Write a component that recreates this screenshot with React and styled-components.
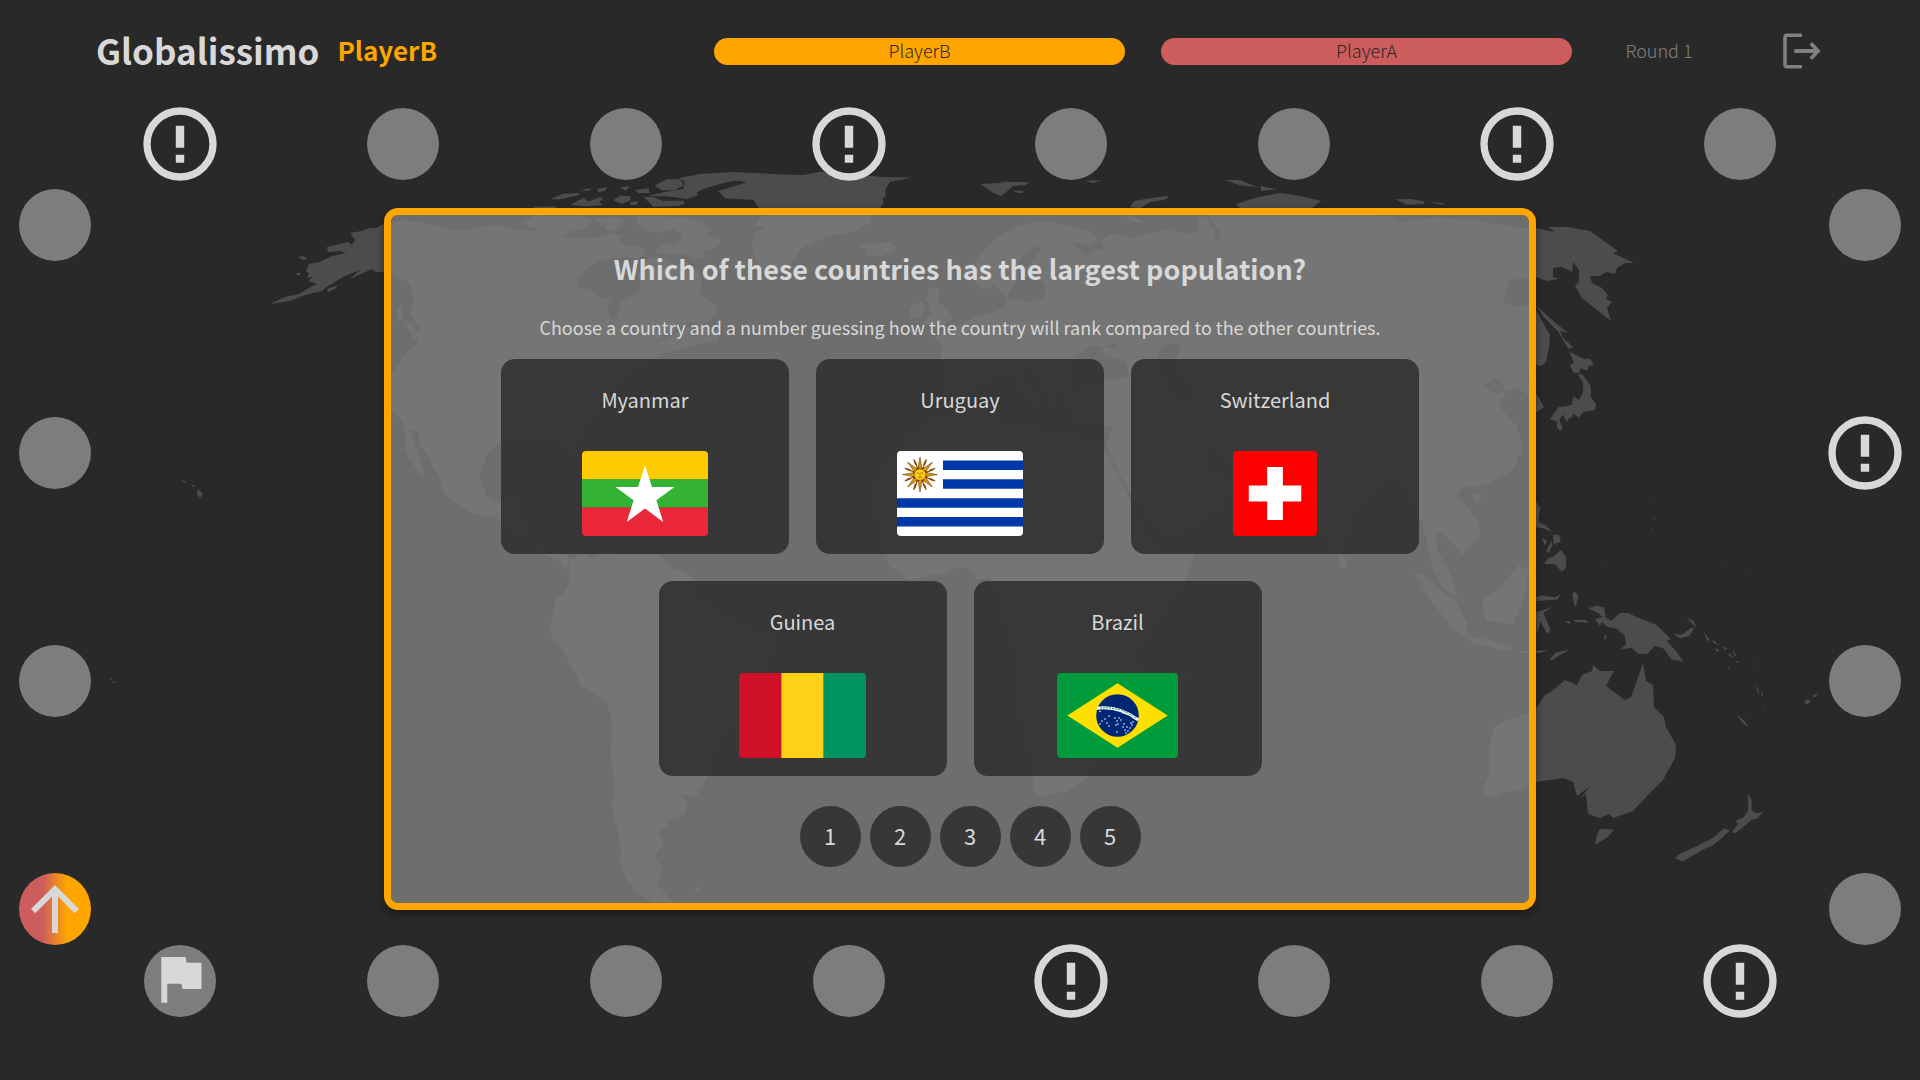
import React, { useState } from "react";
import styled, { createGlobalStyle, css } from "styled-components";
import { MdArrowUpward } from "react-icons/md";

const colors = {
  ground: "#292929",
  land: "#4c4c4c",
  field: "#7d7d7d",
  text: "#d8d8d8",
  muted: "#808080",
  playerA: "#cd5c5c",
  playerB: "#ffa500",
};

const GlobalStyle = createGlobalStyle`
  *, *::before, *::after { box-sizing: border-box; }
  body {
    margin: 0;
    background: ${colors.ground};
    color: ${colors.text};
    font-family: "Noto Sans CJK JP", "Open Sans", sans-serif;
    font-size: 18px;
  }
  h1, h2, p { margin: 0; }
  button { font: inherit; color: inherit; border: 0; padding: 0; cursor: pointer; }
`;

const Page = styled.div`
  position: relative;
  isolation: isolate;
  display: flex;
  flex-direction: column;
  min-height: 100vh;
  padding-bottom: 63px;
`;

const MapBackdrop = styled.svg`
  position: absolute;
  inset: 0;
  z-index: -1;
  width: 100%;
  height: 100%;
  fill: ${colors.land};
`;

const Header = styled.header`
  display: grid;
  grid-template-columns: 618fr 858fr 174px 111px;
  align-items: center;
  height: 108px;
  padding: 0 63px 6px 96px;
`;

const Brand = styled.div`
  display: flex;
  align-items: center;
  gap: 18px;
  padding-bottom: 2px;
`;

const Logo = styled.h1`
  font-size: 35px;
  line-height: 48px;
  font-weight: 700;
`;

const CurrentPlayer = styled.span`
  font-size: 26px;
  line-height: 48px;
  font-weight: 700;
  color: ${colors.playerB};
`;

const Scores = styled.div`
  display: flex;
  gap: 36px;
`;

const ScorePill = styled.div`
  flex: 1;
  padding-bottom: 2px;
  border-radius: 14px;
  background: ${(p) => p.$color};
  color: ${colors.ground};
  font-size: 18px;
  line-height: 25px;
  font-weight: 300;
  text-align: center;
`;

const Round = styled.span`
  padding-bottom: 2px;
  color: ${colors.muted};
  font-size: 18px;
  line-height: 25px;
  font-weight: 300;
  text-align: center;
`;

const ExitButton = styled.button`
  display: flex;
  justify-self: center;
  background: none;
  color: ${colors.muted};
`;

const Board = styled.main`
  flex: 1;
  display: flex;
  flex-direction: column;
`;

const FieldRow = styled.div`
  display: flex;
  justify-content: space-between;
  padding: 0 144px;
`;

const Middle = styled.div`
  flex: 1;
  display: flex;
  justify-content: space-between;
  align-items: stretch;
  margin-top: 9px;
  padding: 0 19px;
`;

const FieldColumn = styled.div`
  display: flex;
  flex-direction: column;
  justify-content: space-between;
`;

const fieldKinds = {
  plain: css`
    background: ${colors.field};
  `,
  event: css`
    background: none;
  `,
  players: css`
    background: linear-gradient(
      90deg,
      ${colors.playerA} 33%,
      ${colors.playerB} 66%
    );
  `,
};

const FieldCircle = styled.div`
  display: flex;
  align-items: center;
  justify-content: center;
  width: 72px;
  height: 72px;
  border-radius: 50%;
  ${(p) => fieldKinds[p.$kind]}

  svg {
    flex: none;
  }
`;

const Dialog = styled.section`
  display: flex;
  flex-direction: column;
  align-items: center;
  align-self: flex-start;
  width: 60vw;
  min-height: 65vh;
  margin-top: 19px;
  padding: 34px 40px;
  border: 7px solid ${colors.playerB};
  border-radius: 14px;
  background: rgba(128, 128, 128, 0.8);
  background-clip: padding-box;
  box-shadow: 0 4px 8px rgba(0, 0, 0, 0.4);
`;

const Question = styled.h2`
  font-size: 27px;
  line-height: 40px;
  font-weight: 700;
  text-align: center;
`;

const Hint = styled.p`
  margin-top: 26px;
  font-size: 18px;
  line-height: 24px;
  text-align: center;
`;

const Countries = styled.div`
  display: flex;
  flex-wrap: wrap;
  justify-content: center;
  gap: 27px;
  margin-top: 20px;
`;

const CountryCard = styled.button`
  display: flex;
  flex-direction: column;
  align-items: center;
  justify-content: space-between;
  width: 288px;
  height: 195px;
  padding: 26px 18px 18px;
  border-radius: 14px;
  background: rgba(41, 41, 41, 0.8);

  svg {
    display: block;
    height: 85px;
    border-radius: 4px;
  }
`;

const CountryName = styled.span`
  font-size: 20px;
  line-height: 30px;
`;

const Ranks = styled.div`
  display: flex;
  gap: 9px;
  margin-top: 30px;
  padding-left: 20px;
`;

const RankButton = styled.button`
  width: 61px;
  height: 61px;
  padding-bottom: 4px;
  border-radius: 50%;
  background: rgba(41, 41, 41, 0.8);
  font-size: 22px;
  line-height: 30px;
`;

function ExitIcon() {
  return (
    <svg width="40" height="36" viewBox="0 0 40 36" fill="none" stroke="currentColor" aria-hidden="true">
      <path d="M20 2.3H5Q3 2.3 3 4.3V31.7Q3 33.7 5 33.7H20" strokeWidth="3.6" />
      <path d="M12.3 18H35" strokeWidth="4" />
      <path d="M28.8 10.3L36 18L28.8 25.7" strokeWidth="3.8" />
    </svg>
  );
}

function EventIcon() {
  return (
    <svg width="88" height="88" viewBox="0 0 24 24" fill={colors.text} aria-hidden="true">
      <circle cx="12" cy="12" r="9" fill="none" stroke={colors.text} strokeWidth="2" />
      <path d="M10.85 7h2.3v6h-2.3zM10.85 14.9h2.3v2.2h-2.3z" />
    </svg>
  );
}

function StartFlagIcon() {
  return (
    <svg width="72" height="72" viewBox="0 0 72 72" fill={colors.text} aria-hidden="true">
      <path d="M17.3 12H41.5L42.7 17.7H57.5V44H38.5L37.3 38.7H23.3V57.7H17.3Z" />
    </svg>
  );
}

function Field({ kind = "plain" }) {
  if (kind === "event")
    return (
      <FieldCircle $kind="event">
        <EventIcon />
      </FieldCircle>
    );
  if (kind === "start")
    return (
      <FieldCircle $kind="plain">
        <StartFlagIcon />
      </FieldCircle>
    );
  if (kind === "players")
    return (
      <FieldCircle $kind="players">
        <MdArrowUpward size={72} color={colors.text} />
      </FieldCircle>
    );
  return <FieldCircle $kind="plain" />;
}

function MyanmarFlag() {
  return (
    <svg width="126" height="85" viewBox="0 0 126 85" aria-hidden="true">
      <path fill="#fecb00" d="M0 0h126v28.4H0z" />
      <path fill="#34b233" d="M0 28.3h126v28.4H0z" />
      <path fill="#ea2839" d="M0 56.6h126V85H0z" />
      <path fill="#fff" d="M63 14.5L70 36H92.5L74.4 49.2L81.2 71L63 57.6L44.8 71L51.6 49.2L33.5 36H56Z" />
    </svg>
  );
}

function UruguayFlag() {
  const rays = Array.from({ length: 16 }, (_, i) => i * 22.5);
  return (
    <svg width="126" height="85" viewBox="0 0 126 85" aria-hidden="true">
      <path fill="#fff" d="M0 0h126v85H0z" />
      <path
        fill="#0038a8"
        d="M46 9.4h80v9.5H46zM46 28.3h80v9.5H46zM0 47.2h126v9.5H0zM0 66.1h126v9.5H0z"
      />
      <g transform="translate(23 23.6)">
        {rays.map((angle, i) => (
          <path
            key={angle}
            transform={`rotate(${angle})`}
            d={i % 2 ? "M-2 -5Q2.5 -10 0 -16.5Q-2 -11 2 -5Z" : "M-2.2 -5L0 -17.5L2.2 -5Z"}
            fill={i % 2 ? "#7b3f00" : "#d49a12"}
            stroke="#7b3f00"
            strokeWidth="0.6"
          />
        ))}
        <circle r="5.6" fill="#fcd116" stroke="#a86a08" strokeWidth="0.6" />
        <path d="M-3 -1.5h2M1 -1.5h2M-1.8 2.6h3.6M0 -1v2" stroke="#7b3f00" strokeWidth="0.7" />
      </g>
    </svg>
  );
}

function SwissFlag() {
  return (
    <svg width="84" height="85" viewBox="0 0 32 32" preserveAspectRatio="none" aria-hidden="true">
      <path fill="#f00" d="M0 0h32v32H0z" />
      <path fill="#fff" d="M13 6h6v7h7v6h-7v7h-6v-7H6v-6h7z" />
    </svg>
  );
}

function GuineaFlag() {
  return (
    <svg width="127" height="85" viewBox="0 0 3 2" preserveAspectRatio="none" aria-hidden="true">
      <path fill="#ce1126" d="M0 0h1v2H0z" />
      <path fill="#fcd116" d="M1 0h1v2H1z" />
      <path fill="#009460" d="M2 0h1v2H2z" />
    </svg>
  );
}

function BrazilFlag() {
  const stars = [
    [43, 38.5], [66, 40], [52, 43], [45, 48], [48, 46], [50, 50], [52, 53], [43, 51],
    [58, 45], [60, 48], [61, 51], [64, 47], [62, 45], [59, 52], [60, 59],
    [66, 54], [68, 57], [70, 54], [71, 58], [73, 55], [75, 52], [76, 49], [74, 50],
    [69, 60], [67, 51],
  ];
  return (
    <svg width="121" height="85" viewBox="0 0 121 85" aria-hidden="true">
      <path fill="#009c3b" d="M0 0h121v85H0z" />
      <path fill="#ffdf00" d="M60.5 10.3L110.7 42.5L60.5 74.7L10.3 42.5Z" />
      <circle cx="60.5" cy="42.5" r="21.3" fill="#002776" />
      <path d="M39.8 35.3Q62 32.6 81.3 47" fill="none" stroke="#fff" strokeWidth="3" />
      <path d="M43 35.1Q62 33 79 45.2" fill="none" stroke="#009c3b" strokeWidth="1" strokeDasharray="2 1" />
      {stars.map(([x, y]) => (
        <circle key={`${x}-${y}`} cx={x} cy={y} r="0.8" fill="#fff" />
      ))}
    </svg>
  );
}

function WorldMap() {
  return (
    <MapBackdrop viewBox="0 0 1920 1080" preserveAspectRatio="xMidYMid meet" aria-hidden="true">
      {/* North and Central America */}
      <path d="M270 304L285 297L299 294L309 288L317 284L308 281L313 277L307 278L309 273L306 271L309 264L319 262L332 256L346 253L340 251L328 252L327 247L348 242L352 245L355 240L350 233L362 231L370 228L376 228L384 224L406 220L429 224L460 231L470 229L482 227L500 225L510 229L536 231L558 235L575 238L598 237L612 233L622 236L618 241L630 247L638 245L645 253L630 257L613 259L597 262L582 273L575 280L579 289L588 288L600 298L610 300L607 312L612 320L617 319L621 308L620 302L635 295L641 287L638 275L643 265L648 259L655 257L667 258L677 265L687 262L698 272L702 282L700 293L707 300L715 305L717 313L707 322L687 323L667 335L648 347L667 338L687 328L697 327L692 333L715 330L718 342L705 343L687 347L663 353L653 359L640 370L620 385L600 410L590 425L575 445L577 462L568 460L562 444L540 440L520 444L500 442L488 452L479 477L487 497L499 502L515 492L524 492L520 508L512 513L530 518L532 540L550 553L566 553L570 560L566 570L558 560L540 553L515 535L501 523L495 515L480 516L471 513L443 493L439 477L420 443L418 430L410 430L420 457L424 477L420 475L404 450L406 440L402 420L391 412L386 400L388 390L392 373L404 355L418 343L420 328L410 313L414 300L410 283L396 275L384 272L376 272L372 269L350 279L360 270L345 276L328 286L322 291L305 295L290 301Z" />
      <path d="M298 257L303 256L308 259L303 260ZM295 273L301 273L299 276ZM327 289L338 285L335 289L328 292ZM397 308L402 306L403 318L398 324ZM404 323L413 324L420 335L415 341L410 331Z" />
      {/* Canadian arctic islands, Greenland and Iceland */}
      <g transform="translate(520 165) scale(0.33333)">
        <path d="M90 103L130 86L180 84L175 91L120 103ZM180 75L215 70L205 78ZM232 72L262 66L255 78L235 82ZM150 120L190 98L205 110L240 97L250 98L238 112L248 120L200 124ZM280 106L300 92L330 93L332 106L305 117ZM300 67L330 64L318 77ZM345 75L385 70L390 84L355 84ZM330 112L355 108L350 120L332 120ZM404 62L440 43L480 42L492 60L465 76L425 76ZM370 95L400 96L430 108L490 107L495 115L475 123L400 125ZM385 93L430 82L490 72L495 50L475 40L540 27L640 21L745 26L700 38L625 50L560 68L530 82L535 90L500 102L440 94ZM36 125L100 124L115 130L60 136Z" />
        <path d="M0 175L50 150L120 155L180 150L215 165L200 190L155 198L120 215L60 210L45 190ZM225 160L270 158L245 185ZM265 155L315 160L290 200L255 190ZM350 150L420 155L470 155L520 165L570 190L560 210L605 230L580 250L545 255L560 278L520 285L490 265L450 270L405 262L420 240L470 238L490 212L460 190L420 205L380 195L350 180ZM290 275L340 243L375 270L350 280ZM440 530L490 490L540 475L600 500L590 540L560 520L520 530L480 525L490 545L455 555Z" />
        <path d="M595 78L680 52L640 45L745 27L850 30L900 20L1090 36L1175 38L1110 50L1095 75L1098 92L1088 100L1090 115L1080 128L1050 155L1055 172L1000 200L920 215L840 250L820 285L795 310L740 335L715 300L695 240L705 205L745 180L705 185L715 160L740 150L717 128L700 105L615 100Z" />
        <path d="M1015 240L1060 237L1110 232L1132 250L1085 275L1035 270L1045 258Z" />
      </g>
      {/* Cuba and Hispaniola */}
      <path d="M556 478L580 482L602 492L590 493L570 485ZM606 494L630 498L622 503L606 500Z" />
      {/* South America */}
      <path d="M570 560L584 552L590 558L605 550L630 555L657 553L673 570L684 571L692 577L700 597L736 617L775 635L777 650L764 680L750 720L722 740L712 770L706 780L696 797L679 793L688 805L684 815L667 819L667 827L657 832L663 843L655 857L663 870L657 883L673 903L653 903L637 893L625 877L620 860L621 847L617 827L612 808L615 787L611 760L612 720L607 703L580 685L578 677L562 650L552 638L550 627L556 600L564 592L570 580Z" />
      <path d="M692 888L705 887L698 892Z" />
      {/* Eurasia */}
      <path
        fillRule="evenodd"
        d="M962 270L975 262L985 248L1000 235L1020 225L1043 221L1075 227L1092 232L1098 240L1092 246L1071 242L1082 252L1087 255L1106 247L1100 240L1112 234L1130 238L1165 230L1193 234L1200 230L1196 218L1205 216L1216 232L1214 244L1222 236L1208 215L1225 210L1240 208L1236 204L1255 198L1280 193L1300 196L1321 201L1312 208L1345 214L1390 216L1402 222L1435 218L1472 220L1509 226L1515 228L1536 228L1555 232L1548 227L1568 227L1590 231L1618 251L1613 253L1634 263L1625 263L1617 268L1615 274L1606 272L1600 276L1590 276L1592 283L1602 288L1608 295L1606 299L1612 302L1607 308L1611 321L1597 310L1582 298L1575 286L1579 282L1579 270L1573 262L1572 272L1562 267L1553 268L1553 277L1559 279L1547 281L1536 277L1528 278L1509 280L1503 302L1517 307L1528 305L1536 310L1550 335L1549 347L1546 362L1541 366L1536 365L1528 372L1527 382L1536 393L1544 407L1537 412L1530 405L1528 395L1518 388L1507 391L1496 377L1484 385L1494 394L1506 392L1498 405L1517 427L1523 447L1513 470L1490 483L1474 487L1462 487L1457 495L1478 520L1480 537L1462 555L1450 540L1436 530L1437 550L1450 572L1458 597L1444 590L1432 567L1428 545L1421 520L1411 510L1400 485L1385 482L1355 515L1345 548L1330 557L1315 520L1305 490L1285 480L1245 472L1225 460L1205 450L1212 468L1235 480L1225 510L1165 543L1156 535L1120 475L1106 447L1113 425L1080 425L1055 415L1060 390L1095 382L1130 377L1125 362L1100 352L1108 345L1118 344L1112 350L1122 350L1090 345L1075 358L1075 378L1060 395L1070 418L1050 405L1035 375L1020 372L1045 405L1035 410L1010 378L975 385L970 402L942 400L940 360L943 345L934 338L960 325L973 317L990 313L1005 307L1006 298L1030 303L1045 298L1045 285L1040 280L1028 278L1025 270L1042 248L1035 246L1018 262L1018 278L1006 298L994 285L984 290L975 282ZM1158 350L1170 343L1180 346L1178 357L1170 360L1180 375L1192 395L1175 398L1170 378L1158 365Z"
      />
      <path d="M930 287L940 288L938 300L953 318L943 325L920 325L932 315L926 300ZM910 307L922 301L926 309L920 317L909 318Z" />
      {/* Arctic islands north of Europe and Asia */}
      <g transform="translate(640 0) scale(0.40816 0.33333)">
        <path d="M834 552L890 548L880 545L955 547L945 556L915 558L900 573L885 588L865 578ZM915 572L940 572L935 580L918 577ZM1088 542L1132 541L1110 549ZM1200 622L1210 604L1240 596L1295 587L1290 598L1250 606L1225 625ZM1185 645L1205 645L1240 670L1205 665ZM1432 540L1470 540L1512 562L1470 556ZM1520 558L1560 568L1522 573ZM1850 598L1890 597L1920 604L1922 612L1880 614ZM1930 606L1970 609L1968 614Z" />
      </g>
      {/* Africa */}
      <path d="M884 555L870 510L872 480L885 460L910 430L940 412L980 408L1020 425L1060 428L1100 440L1115 470L1140 520L1160 548L1195 546L1193 560L1181 590L1158 627L1140 650L1146 700L1120 730L1102 757L1087 778L1067 791L1041 797L1033 790L1033 777L1019 727L1015 667L996 603L990 578L976 580L968 568L955 568L945 575L930 575L910 580L890 567Z" />
      <path d="M1185 665L1192 675L1178 720L1168 718L1170 690Z" />
      {/* Sri Lanka, Hainan, Sumatra, Java, Borneo */}
      <path d="M1338 553L1346 558L1347 567L1341 569ZM1472 494L1482 494L1480 501L1474 501ZM1414 573L1425 576L1440 590L1456 602L1467 623L1466 637L1454 630L1436 607ZM1466 636L1490 640L1513 649L1505 651L1470 642ZM1519 565L1529 570L1525 593L1513 625L1486 620L1482 600L1498 590Z" />
      {/* Sakhalin and Japan */}
      <g transform="translate(1500 210) scale(0.33333)">
        <path d="M108 285L150 325L203 368L180 363L190 385L220 412L205 416L175 365L130 320ZM208 425L255 448L268 444L282 462L265 470L262 482L240 475L238 489L220 488L210 465L222 460ZM233 493L247 493L272 528L272 560L288 582L285 600L250 605L237 623L222 612L185 618L178 630L188 655L180 663L170 650L172 635L150 628L175 592L215 585L220 560L237 570L250 545L248 515ZM190 622L208 610L218 612L215 625L208 622L202 635Z" />
      </g>
      {/* Philippines, Indonesia, New Guinea and the Pacific */}
      <g transform="translate(1520 280) scale(0.33333 0.39544)">
        <path d="M48 560L60 575L55 612L80 622L95 637L70 628L48 625ZM65 652L82 660L75 672ZM78 685L95 660L98 668L88 690ZM100 643L118 645L122 663L108 665L115 672L100 665ZM72 718L85 703L100 700L122 682L138 700L138 728L125 738L105 718L80 718ZM48 802L65 798L105 802L122 795L112 808L50 812ZM48 840L95 828L70 842L92 885L82 895L62 865L50 895ZM157 795L165 788L176 800L165 830ZM135 863L152 863L148 870ZM162 860L200 860L204 867L165 865ZM90 958L108 942L148 935L120 948L95 962ZM0 938L84 936L60 943L0 944ZM252 902L260 895L256 912Z" />
        <path d="M204 830L230 823L252 828L257 853L273 862L300 842L325 842L350 852L405 870L425 885L452 908L440 913L465 935L490 965L455 960L430 932L405 925L382 945L355 946L335 930L300 935L318 922L315 900L290 882L262 877L245 865L240 875L225 858L248 852L235 843Z" />
        <path d="M460 895L485 897L515 878L522 882L508 900L480 906ZM498 852L520 862L532 882L524 875ZM552 888L572 915L560 910ZM578 910L600 925L580 918ZM585 930L600 938L590 940ZM602 925L625 933L615 935ZM622 943L645 955L630 952ZM638 933L650 953L642 948ZM645 962L656 965L654 970ZM708 1020L720 1050L712 1040ZM722 1040L730 1050L726 1056ZM728 1075L734 1100L730 1090ZM650 1100L665 1108L687 1130L670 1122ZM850 1068L862 1060L873 1065L862 1074ZM875 1052L898 1044L885 1055ZM690 1103L704 1118L696 1112Z" />
        <path d="M240 1388L282 1390L262 1410L225 1428L230 1405ZM683 1300L695 1315L695 1340L706 1348L728 1346L712 1362L695 1365L672 1382L645 1400L636 1396L655 1375L645 1368L670 1360L685 1340ZM612 1387L630 1392L600 1415L578 1430L550 1440L490 1470L465 1463L480 1450L530 1432L580 1410Z" />
        <path d="M390 553h3v3h-3zM401 603h3v4h-3zM393 628h3v3h-3zM255 711h3v3h-3zM603 719h3v3h-3zM675 741h3v3h-3zM710 966h3v3h-3zM718 980h3v4h-3zM622 980h6v3h-6z" />
      </g>
      {/* Australia */}
      <path d="M1537 707L1529 713L1508 720L1494 727L1489 747L1490 773L1482 792L1492 798L1506 792L1523 790L1536 782L1563 778L1573 782L1577 796L1589 787L1581 798L1586 794L1588 814L1600 818L1609 814L1613 818L1633 811L1648 795L1663 780L1675 758L1676 745L1666 727L1664 717L1654 707L1653 685L1646 681L1643 663L1636 683L1631 697L1625 700L1606 686L1614 671L1600 671L1593 665L1592 671L1582 675L1577 685L1565 680L1552 691L1545 695Z" />
      {/* Hawaii and Polynesia */}
      <path d="M182 480L185 481L187 483L183 482ZM191 484L196 486L193 487ZM198 489L203 494L200 498L197 494ZM109 678L112 678L111 680ZM112 682L115 681L114 684Z" />
    </MapBackdrop>
  );
}

const topFields = ["event", "plain", "plain", "event", "plain", "plain", "event", "plain"];
const bottomFields = ["start", "plain", "plain", "plain", "event", "plain", "plain", "event"];
const leftFields = ["plain", "plain", "plain", "players"];
const rightFields = ["plain", "event", "plain", "plain"];

const countries = [
  { name: "Myanmar", Flag: MyanmarFlag },
  { name: "Uruguay", Flag: UruguayFlag },
  { name: "Switzerland", Flag: SwissFlag },
  { name: "Guinea", Flag: GuineaFlag },
  { name: "Brazil", Flag: BrazilFlag },
];

const ranks = [1, 2, 3, 4, 5];

export default function App() {
  const [country, setCountry] = useState(null);
  const [rank, setRank] = useState(null);

  return (
    <Page>
      <GlobalStyle />
      <WorldMap />
      <Header>
        <Brand>
          <Logo>Globalissimo</Logo>
          <CurrentPlayer>PlayerB</CurrentPlayer>
        </Brand>
        <Scores>
          <ScorePill $color={colors.playerB}>PlayerB</ScorePill>
          <ScorePill $color={colors.playerA}>PlayerA</ScorePill>
        </Scores>
        <Round>Round 1</Round>
        <ExitButton type="button" aria-label="Leave game">
          <ExitIcon />
        </ExitButton>
      </Header>
      <Board>
        <FieldRow>
          {topFields.map((kind, i) => (
            <Field key={i} kind={kind} />
          ))}
        </FieldRow>
        <Middle>
          <FieldColumn>
            {leftFields.map((kind, i) => (
              <Field key={i} kind={kind} />
            ))}
          </FieldColumn>
          <Dialog aria-labelledby="question">
            <Question id="question">Which of these countries has the largest population?</Question>
            <Hint>
              Choose a country and a number guessing how the country will rank compared to the other
              countries.
            </Hint>
            <Countries>
              {countries.map(({ name, Flag }) => (
                <CountryCard
                  key={name}
                  type="button"
                  aria-pressed={country === name}
                  onClick={() => setCountry(name)}
                >
                  <CountryName>{name}</CountryName>
                  <Flag />
                </CountryCard>
              ))}
            </Countries>
            <Ranks>
              {ranks.map((n) => (
                <RankButton
                  key={n}
                  type="button"
                  aria-pressed={rank === n}
                  onClick={() => setRank(n)}
                >
                  {n}
                </RankButton>
              ))}
            </Ranks>
          </Dialog>
          <FieldColumn>
            {rightFields.map((kind, i) => (
              <Field key={i} kind={kind} />
            ))}
          </FieldColumn>
        </Middle>
        <FieldRow>
          {bottomFields.map((kind, i) => (
            <Field key={i} kind={kind} />
          ))}
        </FieldRow>
      </Board>
    </Page>
  );
}
